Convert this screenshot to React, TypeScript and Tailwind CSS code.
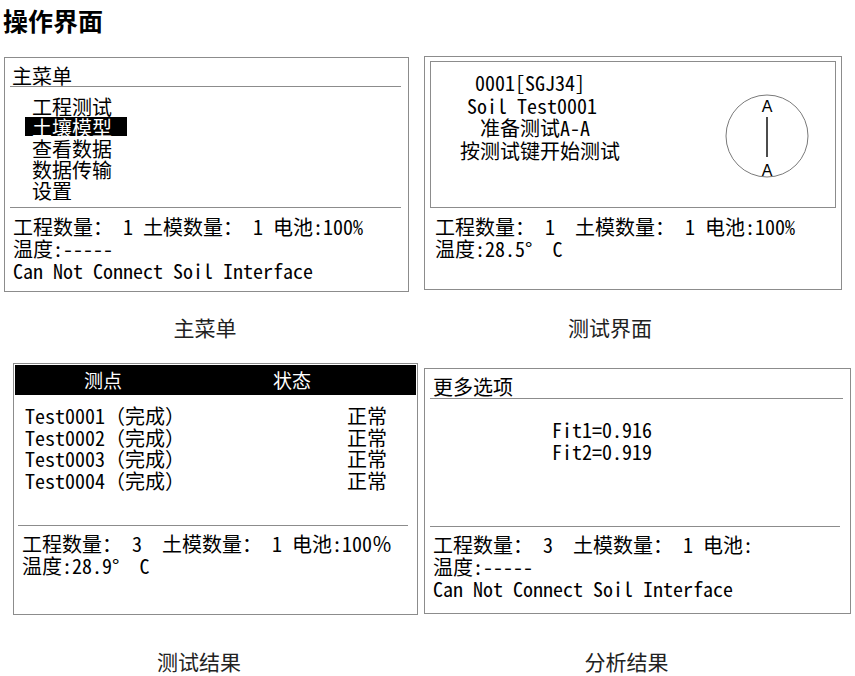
import React from 'react';

const lcd = "font-[family-name:Noto_Sans_Mono_CJK_SC,Noto_Sans_CJK_SC,monospace] text-[20px] text-black";
const rule = "h-px bg-[#8c8c8c]";

const menuItems = ['工程测试', '土壤模型', '查看数据', '数据传输', '设置'];
const testRows = ['Test0001', 'Test0002', 'Test0003', 'Test0004'];

const MainMenu: React.FC = () => (
   <div className={`mt-[1px] ml-[4px] w-[405px] h-[235px] border border-[#8c8c8c] px-[5px] pt-[7px] ${lcd}`}>
      <div className="pl-[2px] leading-[21px]">主菜单</div>
      <div className={`${rule} mr-[2px]`} />
      <div className="pl-[22px] mt-[9px] leading-[21px]">
         {menuItems.map((item) => (
            <div key={item}>
               {item === '土壤模型' ? (
                  <span className="inline-block align-top h-[19px] -ml-[7px] pl-[7px] pr-[15px] bg-black text-white">{item}</span>
               ) : item}
            </div>
         ))}
      </div>
      <div className={`${rule} mt-[6px] mr-[2px]`} />
      <div className="pl-[3px] mt-[8px] leading-[22px] whitespace-pre">
         <div>工程数量： 1 土模数量： 1 电池:100%</div>
         <div>温度:-----</div>
         <div>Can Not Connect Soil Interface</div>
      </div>
   </div>
);

const TestScreen: React.FC = () => (
   <div className={`ml-[15px] w-[418px] h-[234px] border border-[#8c8c8c] px-[5px] pt-[4px] ${lcd}`}>
      <div className="h-[147px] border border-[#8c8c8c] flex justify-between">
         <div className="mt-[10px] leading-[22.5px]">
            <div className="pl-[44px]">0001[SGJ34]</div>
            <div className="pl-[36px]">Soil Test0001</div>
            <div className="pl-[49px]">准备测试A-A</div>
            <div className="pl-[29px]">按测试键开始测试</div>
         </div>
         <svg width="84" height="86" viewBox="0 0 84 86" className="mt-[33px] mr-[26px] overflow-visible">
            <circle cx="42" cy="41" r="41" fill="none" stroke="#7a7a7a" strokeWidth="1" />
            <line x1="42" y1="22" x2="42" y2="62" stroke="#111" strokeWidth="1.5" />
            <text x="42" y="17" textAnchor="middle" fontSize="16" fontFamily="Liberation Sans, sans-serif" fill="#000">A</text>
            <text x="42" y="81" textAnchor="middle" fontSize="16" fontFamily="Liberation Sans, sans-serif" fill="#000">A</text>
         </svg>
      </div>
      <div className="pl-[5px] mt-[8px] leading-[22px] whitespace-pre">
         <div>工程数量： 1  土模数量： 1 电池:100%</div>
         <div>温度:28.5°  C</div>
      </div>
   </div>
);

const ResultScreen: React.FC = () => (
   <div className={`ml-[13px] w-[405px] h-[252px] border border-[#8c8c8c] p-[1px] ${lcd}`}>
      <div className="h-[30px] bg-black text-white flex leading-[30px] text-[19px]">
         <div className="w-[176px] text-center">测点</div>
         <div className="w-[202px] text-center">状态</div>
      </div>
      <div className="h-[130px] pt-[10px] pl-[10px] leading-[21.7px]">
         {testRows.map((row) => (
            <div key={row} className="flex">
               <div className="w-[322px]">{row}（完成）</div>
               <div>正常</div>
            </div>
         ))}
      </div>
      <div className={`${rule} ml-[3px] mr-[8px]`} />
      <div className="pl-[7px] mt-[7px] leading-[22px] whitespace-pre">
         <div>工程数量： 3  土模数量： 1 电池:100％</div>
         <div>温度:28.9°  C</div>
      </div>
   </div>
);

const AnalysisScreen: React.FC = () => (
   <div className={`mt-[5px] ml-[6px] w-[427px] h-[246px] border border-[#8c8c8c] px-[5px] pt-[6px] ${lcd}`}>
      <div className="pl-[3px] leading-[23px]">更多选项</div>
      <div className={`${rule} mr-[2px]`} />
      <div className="h-[127px] pt-[20px] pl-[122px] leading-[22px]">
         <div>Fit1=0.916</div>
         <div>Fit2=0.919</div>
      </div>
      <div className={`${rule} mr-[5px]`} />
      <div className="pl-[3px] mt-[7px] leading-[22px] whitespace-pre">
         <div>工程数量： 3  土模数量： 1 电池:</div>
         <div>温度:-----</div>
         <div>Can Not Connect Soil Interface</div>
      </div>
   </div>
);

const caption = "text-center text-[21px] leading-[24px] text-[#222] font-[family-name:Noto_Sans_CJK_SC,sans-serif]";

export default function App() {
   return (
      <div className="w-[855px] h-[676px] bg-white overflow-hidden">
         <div className="h-[56px] pt-[5px] pl-[3px]">
            <h1 className="text-[25px] leading-[30px] font-bold text-black font-[family-name:Noto_Sans_CJK_SC,sans-serif]">操作界面</h1>
         </div>

         <div className="h-[236px] flex items-start">
            <MainMenu />
            <TestScreen />
         </div>

         <div className="h-[71px] pt-[23px] flex">
            <div className={`w-[410px] ${caption}`}>主菜单</div>
            <div className={`w-[400px] ${caption}`}>测试界面</div>
         </div>

         <div className="h-[252px] flex items-start">
            <ResultScreen />
            <AnalysisScreen />
         </div>

         <div className="pt-[34px] flex">
            <div className={`w-[402px] ${caption}`}>测试结果</div>
            <div className={`w-[462px] ${caption}`}>分析结果</div>
         </div>
      </div>
   );
}
